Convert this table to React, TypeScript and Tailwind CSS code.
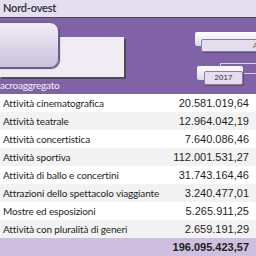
import React from "react";

const rows: [string, string][] = [
  ["Attività cinematografica", "20.581.019,64"],
  ["Attività teatrale", "12.964.042,19"],
  ["Attività concertistica", "7.640.086,46"],
  ["Attività sportiva", "112.001.531,27"],
  ["Attività di ballo e concertini", "31.743.164,46"],
  ["Attrazioni dello spettacolo viaggiante", "3.240.477,01"],
  ["Mostre ed esposizioni", "5.265.911,25"],
  ["Attività con pluralità di generi", "2.659.191,29"],
];

const label = { fontFamily: "Lato, 'Open Sans', sans-serif" };
const num = { fontFamily: "'Liberation Sans', Arial, sans-serif" };

export default function App() {
  return (
    <div className="w-[256px] h-[256px] overflow-hidden bg-white flex flex-col">
      <div
        className="h-[18px] shrink-0 bg-[#e4dfee] border-b border-[#4a4458] flex items-center pl-[3px] text-[11px] font-semibold tracking-[-0.2px] text-[#2e2a38]"
        style={label}
      >
        Nord-ovest
      </div>
      <div className="relative h-[76px] shrink-0 bg-[#8063a6] overflow-hidden flex flex-col justify-end">
        <div className="absolute left-0 top-[19px] w-[124px] h-[40px] bg-[#efedf3] shadow-[2px_2px_0_#4e4a56]" />
        <div className="absolute left-[-12px] top-[4px] w-[71px] h-[46px] rounded-[9px] bg-gradient-to-b from-[#f1eef6] to-[#cbc1dc] border border-[#6f5f8c] shadow-[1px_1px_1px_#5a4a78]" />
        <div className="absolute left-[195px] top-[14px] w-[70px] h-[14px] bg-gradient-to-b from-white to-[#dcdcdc] rounded-[2px]" />
        <div className="absolute left-[201px] top-[21px] w-[70px] h-[13px] bg-[#e3ddec] border border-[#8e7aab] rounded-[2px] shadow-[1px_1px_1px_#5e4c7c] flex items-center pl-[51px] text-[8px] text-[#8a5c2c]" style={num}>
          A
        </div>
        <div className="absolute left-[220px] top-[45px] w-[40px] h-[4px] border-t border-l border-[#d8cfe6]" />
        <div className="absolute left-[243px] top-[55px] w-[20px] h-px bg-[#d8cfe6]" />
        <div className="absolute left-[197px] top-[48px] w-[46px] h-[14px] bg-gradient-to-b from-white to-[#dcdcdc] rounded-[2px]" />
        <div className="absolute left-[204px] top-[53px] w-[39px] h-[14px] bg-[#e3ddec] border border-[#8e7aab] rounded-[2px] shadow-[1px_1px_1px_#5e4c7c] flex items-center justify-center text-[8px] text-[#2e2a38]" style={num}>
          2017
        </div>
        <div className="h-[18px] flex items-center text-[10px] tracking-[-0.2px] text-[#f3f0f7] overflow-hidden" style={label}>
          <span className="ml-[-9px]">Macroaggregato</span>
        </div>
      </div>
      {rows.map(([l, v], i) => (
        <div
          key={l}
          className={`h-[18px] shrink-0 flex items-center justify-between pl-[3px] pr-[7px] ${i % 2 === 1 ? "bg-[#f2f2f2]" : "bg-white"}`}
        >
          <span className="text-[10px] text-[#1e1e1e] tracking-[-0.15px] whitespace-nowrap" style={label}>
            {l}
          </span>
          <span className="text-[11px] text-[#1e1e1e]" style={num}>
            {v}
          </span>
        </div>
      ))}
      <div className="h-[18px] shrink-0 bg-[#cdbfdd] flex items-center justify-end pr-[7px]">
        <span className="text-[11px] font-bold text-[#1e1e1e]" style={num}>
          196.095.423,57
        </span>
      </div>
    </div>
  );
}
